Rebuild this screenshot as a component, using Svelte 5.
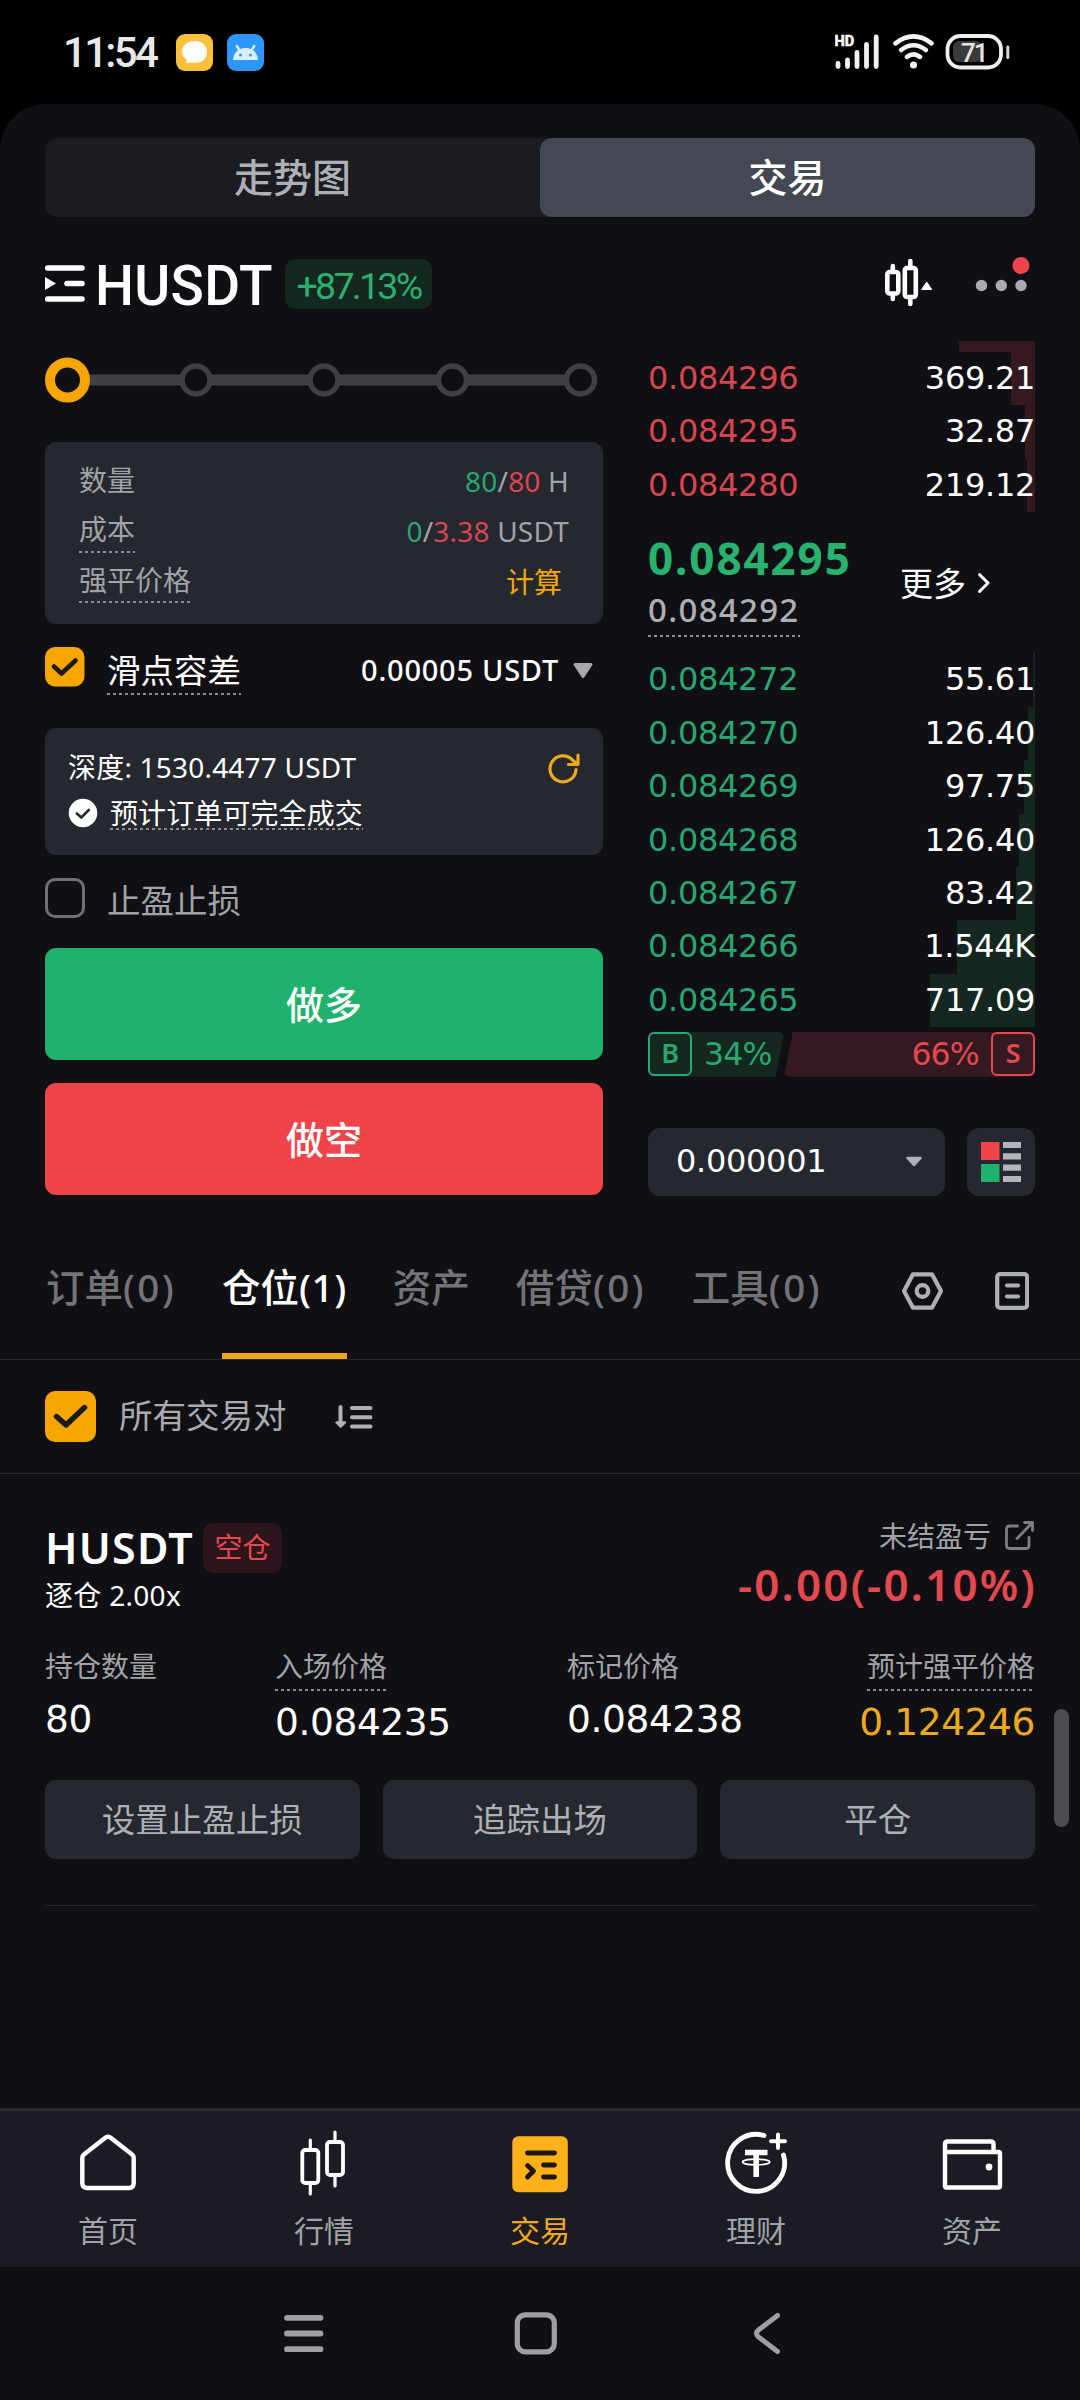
<script>
  const asks = [
    { price: '0.084296', size: '369.21', depth: 24 },
    { price: '0.084295', size: '32.87', depth: 10 },
    { price: '0.084280', size: '219.12', depth: 8 }
  ];
  const bids = [
    { price: '0.084272', size: '55.61', depth: 2 },
    { price: '0.084270', size: '126.40', depth: 7 },
    { price: '0.084269', size: '97.75', depth: 11 },
    { price: '0.084268', size: '126.40', depth: 16 },
    { price: '0.084267', size: '83.42', depth: 19 },
    { price: '0.084266', size: '1.544K', depth: 78 },
    { price: '0.084265', size: '717.09', depth: 105 }
  ];
  const tabs = [
    { label: '订单', count: '(0)' },
    { label: '仓位', count: '(1)', active: true },
    { label: '资产', count: '' },
    { label: '借贷', count: '(0)' },
    { label: '工具', count: '(0)' }
  ];
  const stats = [
    { label: '持仓数量', value: '80' },
    { label: '入场价格', value: '0.084235', dotted: true },
    { label: '标记价格', value: '0.084238' },
    { label: '预计强平价格', value: '0.124246', dotted: true, warn: true }
  ];
  const actions = ['设置止盈止损', '追踪出场', '平仓'];
</script>

<div class="screen">
  <header class="status">
    <span class="clock">11:54</span>
    <svg class="app-icon" width="37" height="37" viewBox="0 0 37 37">
      <rect width="37" height="37" rx="9" fill="#fbc13c" />
      <path d="M18.7 7C26 7 31 11.600 31 18s-5 11-12.300 11c-1.400 0-2.700-.2-3.900-.5-1.200.6-2.900.6-5 .2.9-1 1.300-2 1.100-2.900C7.700 23.800 6 21.200 6 18 6 11.600 11.400 7 18.700 7z" fill="#fff" />
    </svg>
    <svg class="app-icon" width="37" height="37" viewBox="0 0 37 37">
      <rect width="37" height="37" rx="9" fill="#2e97ff" />
      <path d="M12 15.500L9.800 12M25 15.500l2.200-3.500" stroke="#d9efff" stroke-width="2.400" stroke-linecap="round" fill="none" />
      <path d="M6 26c.4-7.500 5.500-12 12.500-12S30.600 18.500 31 26z" fill="#d9efff" />
      <circle cx="13.500" cy="21" r="1.500" fill="#2e97ff" /><circle cx="23.500" cy="21" r="1.500" fill="#2e97ff" />
    </svg>
    <svg class="signals" width="176" height="38" viewBox="835 33 176 38">
      <text x="834.500" y="46" class="hd">HD</text>
      <g stroke="#f2f2f2" stroke-width="4.800" stroke-linecap="round">
        <path d="M838 63.500V66.500M847.500 60V66.500M857 52.500V66.500M866.500 44.500V66.500M876.200 37V66.500" />
      </g>
      <g stroke="#f6f6f6" stroke-width="4.600" stroke-linecap="round" fill="none">
        <path d="M895.500 43.300Q913.500 29.500 931.500 43.300M901.200 50Q913.500 40.500 925.800 50M907 56.800Q913.500 52 920 56.800" />
      </g>
      <circle cx="913.500" cy="65" r="3.500" fill="#f6f6f6" />
      <rect x="953" y="41" width="29" height="21" rx="6" fill="#3a3a3a" />
      <rect x="947.500" y="36" width="53.500" height="31.500" rx="13" stroke="#f0f0f0" stroke-width="3.800" fill="none" />
      <path d="M1007.800 47V57.500" stroke="#d8d8d8" stroke-width="3" stroke-linecap="round" />
      <text x="961" y="62" class="battery">71</text>
    </svg>
  </header>

  <main class="panel">
    <div class="segment">
      <span>走势图</span>
      <span class="on">交易</span>
    </div>

    <div class="pair">
      <svg width="40" height="40" viewBox="0 0 40 40">
        <path d="M2.700 4H37M22 19.500H37M2.700 35H37" stroke="#fff" stroke-width="5.600" stroke-linecap="round" />
        <path d="M0 13L11 19.500L0 26z" fill="#fff" />
      </svg>
      <h1>HUSDT</h1>
      <span class="change">+87.13%</span>
      <svg class="pair-tools" width="150" height="60" viewBox="885 253 150 60">
        <g stroke="#fff" stroke-width="4.600" fill="none" stroke-linecap="round">
          <rect x="887.300" y="271" width="11" height="21.500" rx="2.500" />
          <rect x="904.800" y="267" width="11" height="29" rx="2.500" />
          <path d="M892.800 265V269M892.800 294.500V298M910.300 260V265M910.300 298V303" />
        </g>
        <path d="M926.700 281l5 7.500h-10z" fill="#fff" stroke="#fff" stroke-linejoin="round" />
        <g fill="#a9abb3">
          <circle cx="981.500" cy="284.500" r="5.700" /><circle cx="1001.300" cy="284.500" r="5.700" /><circle cx="1021" cy="284.500" r="5.700" />
        </g>
        <circle cx="1021" cy="264.500" r="8.500" fill="#ef454a" />
      </svg>
    </div>

    <div class="trade">
      <section class="form">
        <svg class="slider" width="558" height="78" viewBox="0 0 558 78">
          <path d="M22 39H535" stroke="#414143" stroke-width="11" />
          <circle cx="22.500" cy="39" r="17.500" fill="#101014" stroke="#f7a600" stroke-width="10" />
          <g fill="#101014" stroke="#414143" stroke-width="5.400">
            <circle cx="151" cy="39" r="14" /><circle cx="279" cy="39" r="14" /><circle cx="407.500" cy="39" r="14" /><circle cx="535.500" cy="39" r="14" />
          </g>
        </svg>

        <div class="box summary">
          <div><span>数量</span><b><i class="up">80</i>/<i class="down">80</i> H</b></div>
          <div><span class="dotted">成本</span><b><i class="up">0</i>/<i class="down">3.38</i> USDT</b></div>
          <div><span class="dotted">强平价格</span><b class="calc">计算</b></div>
        </div>

        <div class="slip">
          <svg class="tick" width="40" height="40" viewBox="0 0 40 40">
            <rect width="39.500" height="39.500" rx="10" fill="#f7a600" />
            <path d="M9 19.500l7.500 7L30.500 13.500" stroke="#1c1a17" stroke-width="4.600" stroke-linecap="round" stroke-linejoin="round" fill="none" />
          </svg>
          <span class="slip-label dotted">滑点容差</span>
          <span class="slip-value">0.00005 USDT</span>
          <svg class="caret" width="22" height="18" viewBox="0 0 22 18"><path d="M3 2.500H19L11 14.500z" fill="#a6a8ae" stroke="#a6a8ae" stroke-width="3" stroke-linejoin="round" /></svg>
        </div>

        <div class="box depth">
          <div>
            <span class="depth-text">深度: 1530.4477 USDT</span>
            <svg class="refresh" width="34" height="34" viewBox="0 0 34 34" fill="none" stroke="#eda91d" stroke-width="3.200" stroke-linecap="round" stroke-linejoin="round">
              <path d="M29 18.500a13 13 0 1 1-3.500-9.500L30.500 13.500M31 4V13.500H21.500" />
            </svg>
          </div>
          <div>
            <svg width="30" height="30" viewBox="0 0 30 30"><circle cx="15" cy="15" r="14.300" fill="#fff" /><path d="M8.800 15.500l4.500 4L20.800 12" stroke="#25282e" stroke-width="2.600" fill="none" stroke-linecap="round" /></svg>
            <span class="fill-note dotted">预计订单可完全成交</span>
          </div>
        </div>

        <div class="tpsl"><i class="empty-check"></i><span>止盈止损</span></div>

        <button class="long">做多</button>
        <button class="short">做空</button>
      </section>

      <section class="book">
        <div class="book-cut"></div>
        {#each asks as r}
          <div class="row ask" style="background-size: {r.depth}px 100%"><span>{r.price}</span><em>{r.size}</em></div>
        {/each}
        <div class="mid">
          <div class="mid-prices">
            <strong>0.084295</strong>
            <span class="dotted">0.084292</span>
          </div>
          <span class="more">更多</span>
          <svg width="14" height="24" viewBox="0 0 14 24"><path d="M2.500 3.500L11 12L2.500 20.500" stroke="#fff" stroke-width="3" fill="none" stroke-linecap="round" stroke-linejoin="round" /></svg>
        </div>
        {#each bids as r}
          <div class="row bid" style="background-size: {r.depth}px 100%"><span>{r.price}</span><em>{r.size}</em></div>
        {/each}
        <div class="ratio">
          <div class="buy"><b>B</b><span>34%</span></div>
          <div class="sell"><span>66%</span><b>S</b></div>
        </div>
        <div class="step-row">
          <div class="step"><span>0.000001</span><svg width="18" height="12" viewBox="0 0 18 12"><path d="M2.500 2H15.500L9 9z" fill="#b0b2b8" stroke="#b0b2b8" stroke-width="2.500" stroke-linejoin="round" /></svg></div>
          <div class="mode">
            <svg width="40" height="40" viewBox="0 0 40 40">
              <path d="M0 0H18.500V18H0z" fill="#ef454a" /><path d="M0 22H18.500V40H0z" fill="#20b26c" />
              <path d="M22 3H40M22 14.300H40M22 25.700H40M22 37H40" stroke="#b3b5ba" stroke-width="6.200" />
            </svg>
          </div>
        </div>
      </section>
    </div>

    <nav class="tabs">
      {#each tabs as t}
        <span class:active={t.active}>{t.label}<em>{t.count}</em></span>
      {/each}
      <svg width="128" height="42" viewBox="901 1270 128 42" fill="none" stroke="#adb0b5" stroke-width="4.200" stroke-linejoin="round">
        <path d="M913 1274.300H932L941 1291L932 1307.700H913L904 1291z" />
        <circle cx="922.500" cy="1291" r="5.800" />
        <rect x="997.200" y="1274.200" width="30" height="33.600" rx="3" />
        <path d="M1007 1285.500H1018M1007 1296.500H1018" stroke-linecap="round" />
      </svg>
    </nav>

    <div class="filter">
      <svg width="51" height="51" viewBox="0 0 51 51">
        <rect width="51" height="51" rx="10" fill="#f7a600" />
        <path d="M11.500 25.500l9.500 8.500L39.500 16.500" stroke="#1c1a17" stroke-width="5.400" stroke-linecap="round" stroke-linejoin="round" fill="none" />
      </svg>
      <span>所有交易对</span>
      <svg class="sort" width="38" height="28" viewBox="0 0 38 28" fill="none" stroke="#adb0b5" stroke-width="4" stroke-linecap="round" stroke-linejoin="round">
        <path d="M5.500 4V20M17 5H35.500M17 14.300H35.500M17 23.500H35.500" />
        <path d="M1.500 19.500H10L5.700 23.700z" fill="#adb0b5" stroke-width="2.400" />
      </svg>
    </div>

    <article class="position">
      <div class="pos-head">
        <div>
          <div class="pos-name"><h2>HUSDT</h2><span class="side">空仓</span></div>
          <p class="margin">逐仓 2.00x</p>
        </div>
        <div class="pnl">
          <div class="pnl-label"><span>未结盈亏</span>
            <svg width="31" height="31" viewBox="0 0 31 31" fill="none" stroke="#7c7e83" stroke-width="2.800" stroke-linecap="round" stroke-linejoin="round">
              <path d="M13.500 6H5.500Q2.500 6 2.500 9V25.500Q2.500 28.500 5.500 28.500H22Q25 28.500 25 25.500V17.500M13 18.500L28.500 2.500M20.500 2.500H28.500V10.500" />
            </svg>
          </div>
          <strong>-0.00(-0.10%)</strong>
        </div>
      </div>
      <div class="stats">
        {#each stats as s}
          <div class:warn={s.warn}>
            <span class="stat-label" class:dotted={s.dotted}>{s.label}</span>
            <span class="stat-value" class:lower={s.dotted}>{s.value}</span>
          </div>
        {/each}
      </div>
      <div class="actions">
        {#each actions as a}<button>{a}</button>{/each}
      </div>
    </article>

    <i class="scroll-thumb"></i>
  </main>

  <nav class="bottom">
    <div>
      <svg width="72" height="72" viewBox="0 0 72 72" fill="none" stroke="#fff" stroke-width="4.400" stroke-linejoin="round">
        <path d="M12.500 30Q10.300 31.500 10.300 34V59Q10.300 64 15.300 64H57Q61.700 64 61.700 59V34Q61.700 31.500 59.500 30L38 13.300Q36 12 34 13.300z" />
      </svg>
      <span>首页</span>
    </div>
    <div>
      <svg width="72" height="72" viewBox="0 0 72 72" fill="none" stroke="#fff" stroke-width="3.800">
        <rect x="14.300" y="26" width="16" height="33" rx="3" /><rect x="39" y="18" width="16" height="33" rx="3" />
        <path d="M22.300 16V26M22.300 59V70M47 8V18M47 51V62" stroke-width="3.200" stroke-linecap="round" />
      </svg>
      <span>行情</span>
    </div>
    <div class="current">
      <svg width="72" height="72" viewBox="0 0 72 72">
        <rect x="8.300" y="12.300" width="55.500" height="56" rx="6" fill="#ffb11a" />
        <path d="M23.500 29H50.500M39.500 41H50.500M39.500 53H50.500M23.500 41.500L29.500 47L23.500 53" stroke="#1f1508" stroke-width="4.800" fill="none" stroke-linecap="round" stroke-linejoin="round" />
      </svg>
      <span>交易</span>
    </div>
    <div>
      <svg width="72" height="72" viewBox="0 0 72 72" fill="none" stroke="#fff" stroke-linecap="round">
        <path d="M44 11.500A28.500 28.500 0 1 0 63.500 31" stroke-width="4.800" />
        <path d="M58 10.500V24M51 17.300H65" stroke-width="4" />
        <path d="M25 28.500H47.500M36.200 28.500V53" stroke-width="5.600" stroke-linecap="butt" />
        <ellipse cx="36.200" cy="38" rx="13.600" ry="2.800" stroke-width="1.700" />
      </svg>
      <span>理财</span>
    </div>
    <div>
      <svg width="72" height="72" viewBox="0 0 72 72" fill="none" stroke="#fff" stroke-width="4.400" stroke-linejoin="round">
        <path d="M9 29V20Q9 17.500 11.500 17.500H54.500Q57.500 17.500 57.500 20V28" /><rect x="9" y="28" width="55" height="35.500" rx="1.500" />
        <circle cx="53" cy="43" r="3.400" fill="#fff" stroke="none" />
      </svg>
      <span>资产</span>
    </div>
  </nav>

  <footer class="system">
    <svg width="500" height="46" viewBox="282 2310 500 46" fill="none" stroke="#9f9fa3" stroke-linecap="round" stroke-linejoin="round">
      <path d="M287 2317.800H320.500M287 2333.500H320.500M287 2349.200H320.500" stroke-width="5.800" />
      <rect x="517.300" y="2314.800" width="37" height="37" rx="8" stroke-width="5.200" />
      <path d="M777.500 2315.500L758.500 2330Q754.500 2333.500 758.500 2337L777.500 2351.500" stroke-width="5" />
    </svg>
  </footer>
</div>

<style>
  :global(body) { background: #000; }
  .screen {
    width: 1080px;
    height: 2400px;
    overflow: hidden;
    display: flex;
    flex-direction: column;
    background: #000;
    color: #fff;
    font-family: 'Noto Sans', 'Noto Sans CJK SC', sans-serif;
    font-size: 28px;
  }
  h1, h2, p { margin: 0; }
  i, em { font-style: normal; }
  svg { flex: none; display: block; }
  button { border: 0; padding: 0; font: inherit; color: inherit; display: block; }
  span { white-space: nowrap; }
  .dotted {
    background: repeating-linear-gradient(90deg, #8b8d92 0 3px, transparent 3px 6px) left bottom / 100% 2px no-repeat;
  }

  .status { height: 104px; flex: none; box-sizing: border-box; padding: 0 69px 0 63px; display: flex; align-items: center; }
  .clock { width: 113px; padding-top: 2px; font: 500 42px/50px Roboto, sans-serif; letter-spacing: -2.700px; color: #e9e9e9; }
  .app-icon { margin-right: 14px; }
  .signals { margin-left: auto; }
  .hd { font: 700 14.5px Roboto, sans-serif; fill: #fff; stroke: #fff; stroke-width: .6px; }
  .battery { font: 500 26px Roboto, sans-serif; letter-spacing: -2px; fill: #e4e4e4; }

  .panel {
    position: relative;
    flex: 1;
    background: #101014;
    border-radius: 46px 46px 0 0;
    padding-top: 34px;
  }
  .segment { margin: 0 45px; height: 79px; display: flex; border-radius: 12px; background: #1c1b21; color: #adb0b5; }
  .segment span { flex: 1; text-align: center; font-size: 39px; line-height: 77px; font-weight: 500; border-radius: 12px; }
  .segment .on { background: #434852; color: #fff; }

  .pair { height: 124px; box-sizing: border-box; padding: 10px 45px 0; display: flex; align-items: center; }
  .pair h1 { margin-left: 10px; padding-top: 3px; width: 190px; font: 500 55px/60px Roboto, sans-serif; letter-spacing: .3px; }
  .change { width: 147px; height: 48px; padding-top: 2px; border-radius: 10px; background: #13281f; color: #2bb070; font: 400 37.5px/50px Roboto, sans-serif; letter-spacing: -2.700px; text-align: center; }
  .pair-tools { margin-left: auto; }

  .trade { padding: 0 45px; display: flex; gap: 45px; height: 855px; }
  .form { width: 558px; display: flex; flex-direction: column; }
  .slider { overflow: visible; }
  .box { background: #25282e; border-radius: 11px; box-sizing: border-box; }
  .summary { margin-top: 23px; height: 182px; padding: 15px 34px 0; color: #a1a3a8; }
  .summary div { height: 50px; display: flex; align-items: center; justify-content: space-between; }
  .summary span { height: 42px; line-height: 39px; }
  .summary div:nth-child(2) span { line-height: 36px; }
  .summary b { font-weight: 400; letter-spacing: .2px; margin-top: -2px; }
  .summary .calc { padding-right: 7px; color: #f7a600; letter-spacing: 0; }
  .up { color: #28a772; }
  .down { color: #d9464f; }

  .slip { height: 104px; display: flex; align-items: flex-start; }
  .tick { margin-top: 23px; }
  .slip-label { margin: 24px 0 0 22px; height: 47px; line-height: 45px; font-size: 33.5px; font-weight: 400; }
  .slip-value { margin: 23px 13px 0 auto; line-height: 45px; font-size: 29px; font-weight: 500; letter-spacing: .75px; }
  .caret { margin: 38px 9px 0 0; }

  .depth { height: 127px; padding: 17px 22px 0 23px; }
  .depth div { height: 45px; display: flex; align-items: center; }
  .depth-text { letter-spacing: .2px; margin-top: -3px; }
  .refresh { margin-left: auto; }
  .fill-note { margin-left: 12px; height: 34px; line-height: 34px; letter-spacing: .1px; }

  .tpsl { height: 93px; display: flex; align-items: flex-start; color: #a1a3a8; }
  .empty-check { margin-top: 23px; width: 34px; height: 34px; border: 3px solid #707176; border-radius: 10px; }
  .tpsl span { margin: 23px 0 0 22px; font-size: 33.5px; line-height: 44px; }

  .long, .short { height: 112px; border-radius: 11px; font-size: 38px; font-weight: 500; line-height: 111px; }
  .long { background: #20b26c; }
  .short { background: #ef454a; margin-top: 23px; }

  .book { width: 387px; font: 400 32px/53.4px 'DejaVu Sans', sans-serif; letter-spacing: -.3px; }
  .book-cut { height: 11px; width: 76px; margin-left: auto; background: #341a20; }
  .row { height: 53.4px; display: flex; justify-content: space-between; background-position: right top; background-repeat: no-repeat; }
  .ask { background-image: linear-gradient(#341a20, #341a20); color: #d9464f; }
  .bid { background-image: linear-gradient(#14281f, #14281f); color: #28a772; }
  .row em { color: #fff; }
  .mid { height: 141.300px; display: flex; align-items: center; font-family: 'Noto Sans', 'Noto Sans CJK SC', sans-serif; }
  .mid-prices { width: 252px; display: flex; flex-direction: column; align-items: flex-start; padding-top: 3px; }
  .mid-prices strong { font-size: 44px; line-height: 54px; font-weight: 700; letter-spacing: 1.900px; color: #28b26e; }
  .mid-prices span { margin-top: 1px; font-size: 33px; line-height: 47px; height: 51px; font-weight: 500; letter-spacing: 1.300px; color: #adaeb5; }
  .more { font-size: 33px; line-height: 44px; margin-right: 11px; padding-top: 2px; letter-spacing: 0; }
  .ratio { margin-top: 4.500px; height: 45px; display: flex; line-height: 45px; font-size: 31.5px; }
  .ratio div { display: flex; }
  .ratio b { width: 40px; height: 40px; border: 2.5px solid; border-radius: 6px; font: 600 27px/38px 'Noto Sans', sans-serif; text-align: center; }
  .buy { width: 136px; background: #14281f; color: #28a772; clip-path: polygon(0 0, 100% 0, 94% 100%, 0 100%); border-radius: 6px; }
  .buy span { margin-left: 12px; letter-spacing: -.8px; }
  .sell { flex: 1; justify-content: flex-end; background: #341a20; color: #e5484f; clip-path: polygon(3.500% 0, 100% 0, 100% 100%, 0 100%); border-radius: 6px; }
  .sell span { margin-right: 12px; letter-spacing: -.8px; }
  .step-row { margin-top: 51px; display: flex; justify-content: space-between; }
  .step { width: 297px; height: 68px; box-sizing: border-box; padding: 0 22px 0 28px; border-radius: 12px; background: #25282e; display: flex; align-items: center; justify-content: space-between; line-height: 66px; }
  .step span { margin-top: -1px; }
  .mode { width: 68px; height: 68px; border-radius: 12px; background: #25282e; display: flex; align-items: center; justify-content: center; }

  .tabs { height: 164px; box-sizing: border-box; padding: 0 51px 0 46px; border-bottom: 1px solid #292a2e; display: flex; gap: 46px; font-size: 38.5px; font-weight: 500; color: #737378; }
  .tabs span { box-sizing: border-box; height: 163px; padding-top: 64px; line-height: 54px; }
  .tabs em { letter-spacing: 2.300px; }
  .tabs .active { color: #fff; border-bottom: 6px solid #f0a41a; }
  .tabs .active em { letter-spacing: .6px; }
  .tabs svg { margin: 74px 0 0 auto; }

  .filter { height: 114px; box-sizing: border-box; border-bottom: 1px solid #292a2e; padding: 0 45px; display: flex; align-items: center; color: #a9abb0; }
  .filter span { margin: -3px 0 0 23px; font-size: 33.5px; line-height: 44px; }
  .sort { margin-left: 48px; }

  .position { margin: 0 45px; padding-top: 49px; height: 382px; border-bottom: 1px solid #25262a; }
  .pos-head { display: flex; justify-content: space-between; }
  .pos-name { display: flex; align-items: center; height: 50px; }
  .pos-name h2 { width: 158px; font-size: 43px; line-height: 50px; font-weight: 600; letter-spacing: 1.200px; }
  .side { width: 79px; height: 50px; line-height: 49px; text-align: center; border-radius: 10px; background: #2c151b; color: #e5484f; }
  .margin { height: 46px; line-height: 44px; letter-spacing: .3px; }
  .pnl { margin-top: -8px; display: flex; flex-direction: column; align-items: flex-end; }
  .pnl-label { display: flex; align-items: center; gap: 13px; height: 41px; color: #a1a3a8; }
  .pnl-label span { margin-top: -1px; }
  .pnl strong { font-size: 44px; line-height: 56px; font-weight: 600; letter-spacing: 2.200px; margin-right: -2px; color: #e5484f; }
  .stats { height: 133px; margin-top: 28px; display: grid; grid-template-columns: 230px 292px 1fr auto; }
  .stats div { display: flex; flex-direction: column; align-items: flex-start; }
  .stats .warn { align-items: flex-end; color: #eda91d; }
  .stat-label { height: 44px; line-height: 39px; color: #a1a3a8; }
  .stat-value { margin-top: 3px; font: 400 37.5px/50px 'DejaVu Sans', sans-serif; letter-spacing: -.4px; }
  .stat-value.lower { margin-top: 6px; }
  .actions { display: grid; grid-template-columns: repeat(3, 1fr); gap: 23px; }
  .actions button { height: 79px; border-radius: 11px; background: #25282e; color: #adb0b5; font-size: 33.5px; line-height: 79px; }

  .scroll-thumb { position: absolute; right: 11px; top: 1605px; width: 15px; height: 118px; border-radius: 8px; background: #4a4c52; }

  .bottom { flex: none; height: 159px; box-sizing: border-box; border-top: 3px solid #292a2e; background: #1b1c23; display: flex; }
  .bottom div { flex: 1; display: flex; flex-direction: column; align-items: center; padding-top: 13px; color: #a1a3a8; }
  .bottom span { margin-top: 14px; font-size: 30px; line-height: 42px; }
  .bottom .current { color: #f5a81b; }

  .system { flex: none; height: 133px; background: #101014; padding: 43px 0 0 282px; box-sizing: border-box; }
</style>
